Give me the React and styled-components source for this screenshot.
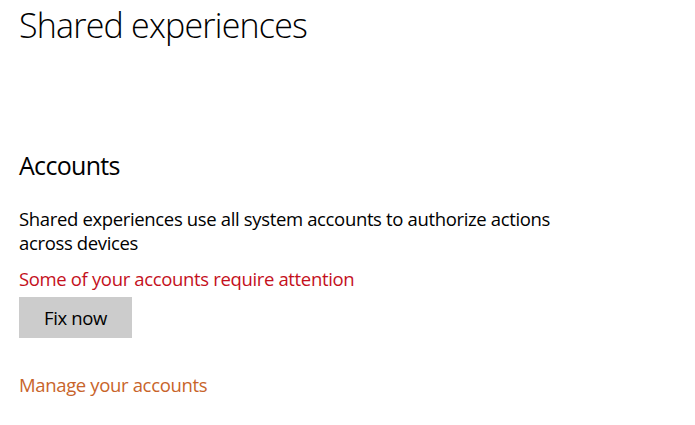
import React from 'react';
import styled, { createGlobalStyle } from 'styled-components';

const Global = createGlobalStyle`
    html, body {
        margin: 0;
        padding: 0;
        background: #ffffff;
    }
    body {
        font-family: "Open Sans", "Noto Sans", sans-serif;
        color: #000000;
    }
`;

const Page = styled.div`
    width: 695px;
    height: 425px;
    padding: 2px 0 0 19px;
    box-sizing: border-box;
    overflow: hidden;
`;

const Title = styled.h1`
    margin: 0;
    font-size: 34px;
    line-height: 46px;
    font-weight: 300;
    letter-spacing: -0.8px;
`;

const SectionTitle = styled.h2`
    margin: 100px 0 0;
    font-size: 25px;
    line-height: 34px;
    font-weight: 400;
    letter-spacing: -0.7px;
`;

const Text = styled.p`
    margin: ${p => p.$gap || 0}px 0 0;
    width: 545px;
    font-size: 18.5px;
    line-height: 24px;
    letter-spacing: -0.35px;
    color: ${p => p.$color || '#000000'};
`;

const Button = styled.button`
    display: block;
    margin-top: 6px;
    width: 113px;
    height: 41px;
    border: none;
    background: #cccccc;
    font-family: inherit;
    font-size: 18.5px;
    letter-spacing: -0.35px;
    color: #000000;
    padding: 0;
`;

const Link = styled.a`
    display: block;
    margin-top: 35px;
    font-size: 18.5px;
    line-height: 24px;
    letter-spacing: -0.35px;
    color: #c8642a;
    text-decoration: none;
`;

export default () => (
    <Page>
        <Global />
        <Title>Shared experiences</Title>
        <SectionTitle>Accounts</SectionTitle>
        <Text $gap={25}>
            Shared experiences use all system accounts to authorize actions
            across devices
        </Text>
        <Text $gap={12} $color="#c4101c">Some of your accounts require attention</Text>
        <Button>Fix now</Button>
        <Link href="#">Manage your accounts</Link>
    </Page>
);
